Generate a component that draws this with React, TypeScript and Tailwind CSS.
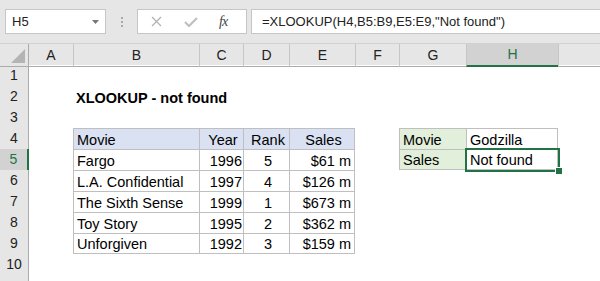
import React from "react";

const FONT = "font-['Liberation_Sans',Arial,sans-serif]";
const COLS = ["A", "B", "C", "D", "E", "F", "G", "H", "I"];
const GRID = "grid grid-cols-[29px_44px_126px_44px_46px_66px_44px_67px_92px_1fr]";

type CellDef = {
  text?: string;
  align?: "left" | "center" | "right";
  bold?: boolean;
  cls?: string;
  selected?: boolean;
};

const movies = [
  ["Fargo", "1996", "5", "$61 m"],
  ["L.A. Confidential", "1997", "4", "$126 m"],
  ["The Sixth Sense", "1999", "1", "$673 m"],
  ["Toy Story", "1995", "2", "$362 m"],
  ["Unforgiven", "1992", "3", "$159 m"],
];

const buildRow = (r: number): Record<string, CellDef> => {
  const row: Record<string, CellDef> = {};
  if (r === 2) row.B = { text: "XLOOKUP - not found", bold: true };
  if (r === 4) {
    const hd = "bg-[#d9e1f2] border-l border-t border-[#bfbfbf]";
    row.B = { text: "Movie", cls: hd };
    row.C = { text: "Year", align: "center", cls: hd };
    row.D = { text: "Rank", align: "center", cls: hd };
    row.E = { text: "Sales", align: "center", cls: hd + " border-r" };
  }
  if (r >= 5 && r <= 9) {
    const m = movies[r - 5];
    const b = "border-l border-t border-[#bfbfbf]" + (r === 9 ? " border-b" : "");
    row.B = { text: m[0], cls: b };
    row.C = { text: m[1], align: "right", cls: b + " pr-[1px]" };
    row.D = { text: m[2], align: "center", cls: b };
    row.E = { text: m[3], align: "right", cls: b + " border-r pr-[3px]" };
  }
  if (r === 4 || r === 5) {
    const g = "bg-[#e2efda] border-l border-t border-[#bfbfbf]" + (r === 5 ? " border-b" : "");
    const h = "border-l border-t border-r border-[#bfbfbf]" + (r === 5 ? " border-b" : "");
    row.G = { text: r === 4 ? "Movie" : "Sales", cls: g };
    row.H = { text: r === 4 ? "Godzilla" : "Not found", cls: h, selected: r === 5 };
  }
  return row;
};

function Cell({ c }: { c?: CellDef }) {
  const align =
    c?.align === "center" ? "justify-center" : c?.align === "right" ? "justify-end" : "justify-start";
  return (
    <div
      className={`relative h-[21px] flex items-end ${align} pl-[3px] leading-[17px] text-[14.5px] text-[#000] whitespace-nowrap ${
        c?.bold ? "font-bold" : ""
      } ${c?.cls ?? ""}`}
    >
      {c?.text}
      {c?.selected && (
        <>
          <div className="absolute left-[-2px] top-[-2px] w-[95px] h-[24px] border-2 border-[#217346] z-10" />
          <div className="absolute left-[88px] top-[17px] w-[8px] h-[8px] bg-[#217346] border border-white z-20" />
        </>
      )}
    </div>
  );
}

export default function App() {
  return (
    <div className={`w-[600px] h-[281px] overflow-hidden bg-white ${FONT}`}>
      {/* formula bar */}
      <div className="h-[44px] bg-[#e6e6e6] border-b border-[#d0d0d0] flex items-start pt-[9px]">
        <div className="ml-[5px] w-[101px] h-[25px] bg-white border border-[#c6c6c6] flex items-center justify-between pl-[6px] pr-[6px]">
          <span className="text-[13px] text-[#222]">H5</span>
          <svg width="7" height="4" viewBox="0 0 7 4">
            <path d="M0 0 H7 L3.5 4 Z" fill="#777" />
          </svg>
        </div>
        <div className="w-[31px] h-[25px] flex flex-col items-center justify-center gap-[2px]">
          <span className="w-[2px] h-[2px] bg-[#a8a8a8]" />
          <span className="w-[2px] h-[2px] bg-[#a8a8a8]" />
          <span className="w-[2px] h-[2px] bg-[#a8a8a8]" />
        </div>
        <div className="w-[110px] h-[25px] bg-white border border-[#c6c6c6] flex items-center">
          <svg className="ml-[13px]" width="11" height="11" viewBox="0 0 11 11">
            <path d="M1 1 L10 10 M10 1 L1 10" stroke="#b3b3b3" strokeWidth="1.3" />
          </svg>
          <svg className="ml-[22px]" width="14" height="10" viewBox="0 0 14 10">
            <path d="M1 5 L5 9 L13 1" stroke="#c0c0c0" strokeWidth="2.2" fill="none" />
          </svg>
          <span className="ml-[21px] font-['Liberation_Serif',serif] italic text-[14px] text-[#444] tracking-[-1px]">
            fx
          </span>
        </div>
        <div className="ml-[4px] flex-1 h-[25px] bg-white border border-r-0 border-[#c6c6c6] flex items-center pl-[10px]">
          <span className="text-[13px] text-[#222] whitespace-nowrap">=XLOOKUP(H4,B5:B9,E5:E9,"Not found")</span>
        </div>
      </div>

      {/* column headers */}
      <div className={`${GRID} h-[21px] bg-[#e6e6e6]`}>
        <div className="relative border-r border-b border-[#ababab]">
          <svg className="absolute right-[3px] bottom-[3px]" width="14" height="14" viewBox="0 0 14 14">
            <path d="M14 0 V14 H0 Z" fill="#b4b4b4" />
          </svg>
        </div>
        {COLS.map((c, i) => (
          <div
            key={c}
            className={`flex items-center justify-center text-[14px] ${
              i > 0 ? "border-l border-[#c6c6c6]" : ""
            } ${
              c === "H"
                ? "bg-[#d2d2d2] text-[#217346] border-b-2 border-b-[#217346]"
                : "text-[#222] border-b border-b-[#ababab]"
            }`}
          >
            {c === "I" ? "" : c}
          </div>
        ))}
      </div>

      {/* sheet rows */}
      {Array.from({ length: 11 }, (_, k) => k + 1).map((r) => {
        const row = buildRow(r);
        return (
          <div key={r} className={`${GRID} h-[21px]`}>
            <div
              className={`flex items-center justify-center text-[14px] border-b border-[#c6c6c6] ${
                r === 5
                  ? "bg-[#d2d2d2] text-[#217346] border-r-2 border-r-[#217346]"
                  : "bg-[#e6e6e6] text-[#222] border-r border-r-[#ababab]"
              }`}
            >
              {r <= 10 ? r : ""}
            </div>
            {COLS.map((c) => (
              <Cell key={c} c={row[c]} />
            ))}
          </div>
        );
      })}
    </div>
  );
}
